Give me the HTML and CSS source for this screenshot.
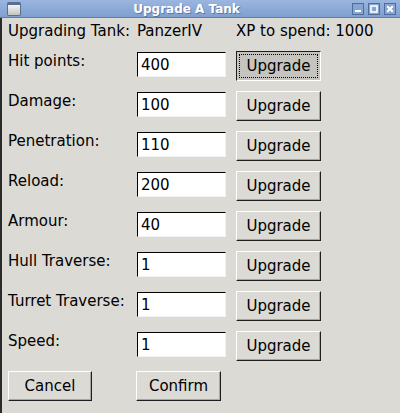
FILE: index.html
```html
<!DOCTYPE html>
<html>
<head>
    <meta charset="UTF-8">
    <title>Upgrade A Tank</title>
    <link rel="stylesheet" href="styles.css">
</head>
<body>
    <div class="titlebar">
        <div class="app-icon"></div>
        <div class="title">Upgrade A Tank</div>
        <div class="win-buttons">
            <span class="win-btn">
                <svg width="10" height="10" viewBox="0 0 10 10"><rect x="2" y="6" width="6" height="2" fill="#fff"/></svg>
            </span>
            <span class="win-btn">
                <svg width="10" height="10" viewBox="0 0 10 10"><rect x="2" y="2" width="6" height="6" fill="none" stroke="#fff" stroke-width="1.6"/></svg>
            </span>
            <span class="win-btn">
                <svg width="10" height="10" viewBox="0 0 10 10"><path d="M2.2 2.2 L7.8 7.8 M7.8 2.2 L2.2 7.8" stroke="#fff" stroke-width="2"/></svg>
            </span>
        </div>
    </div>

    <div class="window">
        <div class="form">
            <div class="head">Upgrading Tank:</div>
            <div class="head">PanzerIV</div>
            <div class="head">XP to spend: 1000</div>

            <div class="label">Hit points:</div>
            <input class="entry" type="text" value="400">
            <button class="button focused">Upgrade</button>

            <div class="label">Damage:</div>
            <input class="entry" type="text" value="100">
            <button class="button">Upgrade</button>

            <div class="label">Penetration:</div>
            <input class="entry" type="text" value="110">
            <button class="button">Upgrade</button>

            <div class="label">Reload:</div>
            <input class="entry" type="text" value="200">
            <button class="button">Upgrade</button>

            <div class="label">Armour:</div>
            <input class="entry" type="text" value="40">
            <button class="button">Upgrade</button>

            <div class="label">Hull Traverse:</div>
            <input class="entry" type="text" value="1">
            <button class="button">Upgrade</button>

            <div class="label">Turret Traverse:</div>
            <input class="entry" type="text" value="1">
            <button class="button">Upgrade</button>

            <div class="label">Speed:</div>
            <input class="entry" type="text" value="1">
            <button class="button">Upgrade</button>

            <button class="button cancel">Cancel</button>
            <button class="button confirm">Confirm</button>
        </div>
    </div>
</body>
</html>
```

FILE: styles.css
```css
html, body {
    margin: 0;
    height: 100%;
}

body {
    font-family: 'DejaVu Sans', sans-serif;
    font-size: 15px;
    background: #dcdad5;
    color: #000;
    overflow: hidden;
}

.titlebar {
    height: 18px;
    box-sizing: border-box;
    display: flex;
    align-items: center;
    background: linear-gradient(#9ab6e0, #7f9fcf);
    border-bottom: 1px solid #5f7eae;
    padding: 0 4px 0 7px;
}

.app-icon {
    width: 12px;
    height: 10px;
    border: 1px solid #5a6e8e;
    border-top-width: 3px;
    border-radius: 2px;
    background: linear-gradient(#f4f4f4, #c4c4c4);
    margin-top: 1px;
}

.title {
    flex: 1;
    text-align: center;
    color: #fff;
    font-weight: bold;
    font-size: 12px;
    text-shadow: 1px 1px 0 rgba(40, 60, 100, 0.45);
}

.win-buttons {
    display: flex;
    gap: 4px;
}

.win-btn {
    width: 10px;
    height: 10px;
    border: 1px solid #4e6c9c;
    background: #86a5d3;
    display: flex;
}

.window {
    height: calc(100% - 18px);
    border-left: 2px solid #2b2b2b;
    box-sizing: border-box;
}

.form {
    display: grid;
    grid-template-columns: 129px 99px 85px;
    grid-template-rows: 33px;
    grid-auto-rows: 40px;
    padding-left: 6px;
}

.head {
    padding-top: 4px;
    white-space: nowrap;
}

.label {
    padding-top: 1px;
    white-space: nowrap;
}

.entry {
    width: 89px;
    height: 25px;
    margin-top: 1px;
    box-sizing: border-box;
    font: 15px 'DejaVu Sans', sans-serif;
    padding: 0 3px;
    background: #fff;
    border: 1px solid;
    border-color: #000 #f2f2f2 #f2f2f2 #000;
    outline: none;
}

.button {
    width: 85px;
    height: 30px;
    box-sizing: border-box;
    font: 15px 'DejaVu Sans', sans-serif;
    color: #000;
    background: #dcdad5;
    border: 1px solid;
    border-color: #fff #1e1e1e #1e1e1e #fff;
    box-shadow: inset -1px -1px 0 #a8a6a1;
    padding: 0;
}

.button.focused {
    background: #c6c4bf;
    border-color: #1e1e1e #fff #fff #1e1e1e;
    box-shadow: none;
    outline: 1px dotted #000;
    outline-offset: -4px;
}

.cancel {
    width: 84px;
}

.confirm {
    margin-left: -1px;
}
```
